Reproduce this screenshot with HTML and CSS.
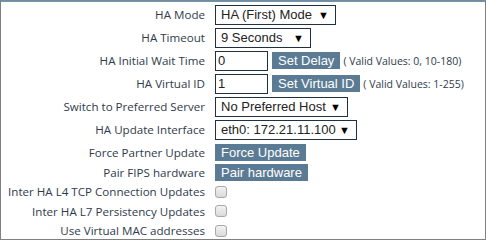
FILE: index.html
```html
<!DOCTYPE html>
<html lang="en">
<head>
    <meta charset="UTF-8">
    <title>HA Settings</title>
    <link rel="stylesheet" href="styles.css">
</head>
<body>
    <div class="panel">
        <div class="row">
            <label class="label">HA Mode</label>
            <div class="field"><span class="select w-mode">HA (First) Mode<span class="arrow">&#9660;</span></span></div>
        </div>
        <div class="row">
            <label class="label">HA Timeout</label>
            <div class="field"><span class="select w-timeout">9 Seconds<span class="arrow">&#9660;</span></span></div>
        </div>
        <div class="row">
            <label class="label">HA Initial Wait Time</label>
            <div class="field">
                <input class="text" type="text" value="0">
                <button class="btn">Set Delay</button>
                <span class="hint">( Valid Values: 0, 10-180)</span>
            </div>
        </div>
        <div class="row">
            <label class="label">HA Virtual ID</label>
            <div class="field">
                <input class="text" type="text" value="1">
                <button class="btn">Set Virtual ID</button>
                <span class="hint">( Valid Values: 1-255)</span>
            </div>
        </div>
        <div class="row">
            <label class="label">Switch to Preferred Server</label>
            <div class="field"><span class="select w-host">No Preferred Host<span class="arrow">&#9660;</span></span></div>
        </div>
        <div class="row">
            <label class="label">HA Update Interface</label>
            <div class="field"><span class="select w-iface">eth0: 172.21.11.100<span class="arrow">&#9660;</span></span></div>
        </div>
        <div class="row force">
            <label class="label">Force Partner Update</label>
            <div class="field"><button class="btn">Force Update</button></div>
        </div>
        <div class="row pair">
            <label class="label">Pair FIPS hardware</label>
            <div class="field"><button class="btn">Pair hardware</button></div>
        </div>
        <div class="row short">
            <label class="label">Inter HA L4 TCP Connection Updates</label>
            <div class="field"><span class="check"></span></div>
        </div>
        <div class="row short">
            <label class="label">Inter HA L7 Persistency Updates</label>
            <div class="field"><span class="check"></span></div>
        </div>
        <div class="row short">
            <label class="label">Use Virtual MAC addresses</label>
            <div class="field"><span class="check"></span></div>
        </div>
    </div>
</body>
</html>
```

FILE: styles.css
```css
body {
    margin: 0;
    background-color: #fff;
}
.panel {
    width: 486px;
    height: 240px;
    box-sizing: border-box;
    border: 1px solid #808080;
    border-top-color: #7c8a96;
    box-shadow: inset 0 1px 0 #6f93b3;
    padding-top: 2px;
}
.row {
    display: flex;
    align-items: center;
    height: 23px;
}
.row.force {
    height: 22px;
}
.row.pair {
    height: 19px;
}
.row.short {
    height: 19.5px;
}
.label {
    width: 204px;
    text-align: right;
    font-family: "Open Sans", sans-serif;
    font-size: 11.6px;
    color: #2f3b4b;
    padding-right: 10px;
    flex-shrink: 0;
    white-space: nowrap;
}
.field {
    display: flex;
    align-items: center;
    gap: 4px;
    font-family: "Liberation Sans", Arial, sans-serif;
    font-size: 13px;
}
.select {
    display: flex;
    align-items: center;
    justify-content: space-between;
    box-sizing: border-box;
    height: 20px;
    border: 1px solid #1f3043;
    padding: 0 6px 0 5px;
    color: #222;
    font-size: 13px;
}
.arrow {
    font-size: 11px;
    color: #000;
}
.w-mode { width: 121px; }
.w-timeout { width: 96px; }
.w-host { width: 133px; }
.w-iface { width: 142px; }
.text {
    box-sizing: border-box;
    width: 53px;
    height: 20px;
    border: 1px solid #1f3043;
    padding: 0 2px;
    margin: 0;
    font-family: "Liberation Sans", Arial, sans-serif;
    font-size: 13px;
    color: #222;
}
.btn {
    background-color: #5b7b94;
    color: #fff;
    border: none;
    height: 17px;
    padding: 0 6px;
    margin: 0;
    font-family: "Liberation Sans", Arial, sans-serif;
    font-size: 13px;
    line-height: 17px;
}
.hint {
    font-family: "Open Sans", sans-serif;
    font-size: 10.5px;
    color: #2f3b4b;
    margin-left: -1px;
    white-space: nowrap;
}
.check {
    display: inline-block;
    box-sizing: border-box;
    width: 12px;
    height: 12px;
    border: 1px solid #a8a8a8;
    border-radius: 3px;
    background: linear-gradient(#f2f2f2, #dadada);
}
```
